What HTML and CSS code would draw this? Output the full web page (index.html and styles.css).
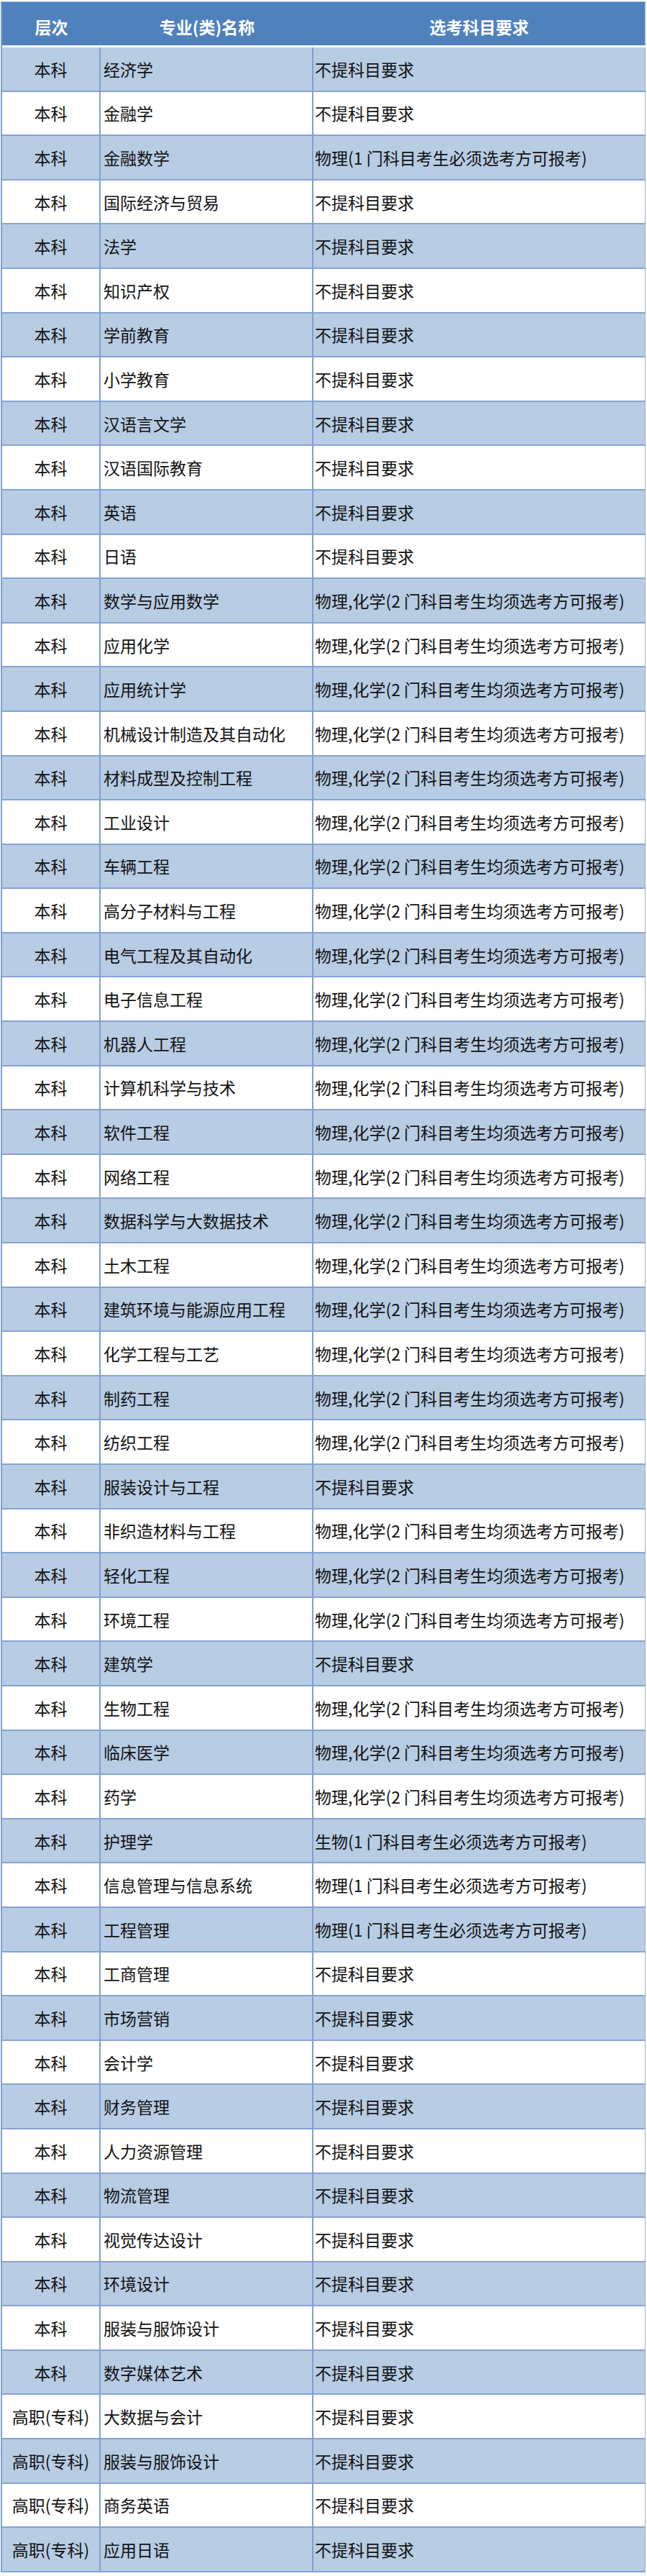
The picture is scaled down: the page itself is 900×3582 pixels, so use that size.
FILE: index.html
```html
<!DOCTYPE html>
<html lang="zh-CN">
<head>
<meta charset="utf-8">
<title>专业选考科目要求</title>
<link rel="stylesheet" href="styles.css">
</head>
<body>
<div class="sheet">
<table class="grid">
<colgroup><col class="c1"><col class="c2"><col class="c3"></colgroup>
<thead>
<tr><th>层次</th><th>专业(类)名称</th><th>选考科目要求</th></tr>
</thead>
<tbody>
<tr><td class="lv">本科</td><td class="nm">经济学</td><td class="rq">不提科目要求</td></tr>
<tr><td class="lv">本科</td><td class="nm">金融学</td><td class="rq">不提科目要求</td></tr>
<tr><td class="lv">本科</td><td class="nm">金融数学</td><td class="rq">物理(1 门科目考生必须选考方可报考)</td></tr>
<tr><td class="lv">本科</td><td class="nm">国际经济与贸易</td><td class="rq">不提科目要求</td></tr>
<tr><td class="lv">本科</td><td class="nm">法学</td><td class="rq">不提科目要求</td></tr>
<tr><td class="lv">本科</td><td class="nm">知识产权</td><td class="rq">不提科目要求</td></tr>
<tr><td class="lv">本科</td><td class="nm">学前教育</td><td class="rq">不提科目要求</td></tr>
<tr><td class="lv">本科</td><td class="nm">小学教育</td><td class="rq">不提科目要求</td></tr>
<tr><td class="lv">本科</td><td class="nm">汉语言文学</td><td class="rq">不提科目要求</td></tr>
<tr><td class="lv">本科</td><td class="nm">汉语国际教育</td><td class="rq">不提科目要求</td></tr>
<tr><td class="lv">本科</td><td class="nm">英语</td><td class="rq">不提科目要求</td></tr>
<tr><td class="lv">本科</td><td class="nm">日语</td><td class="rq">不提科目要求</td></tr>
<tr><td class="lv">本科</td><td class="nm">数学与应用数学</td><td class="rq">物理,化学(2 门科目考生均须选考方可报考)</td></tr>
<tr><td class="lv">本科</td><td class="nm">应用化学</td><td class="rq">物理,化学(2 门科目考生均须选考方可报考)</td></tr>
<tr><td class="lv">本科</td><td class="nm">应用统计学</td><td class="rq">物理,化学(2 门科目考生均须选考方可报考)</td></tr>
<tr><td class="lv">本科</td><td class="nm">机械设计制造及其自动化</td><td class="rq">物理,化学(2 门科目考生均须选考方可报考)</td></tr>
<tr><td class="lv">本科</td><td class="nm">材料成型及控制工程</td><td class="rq">物理,化学(2 门科目考生均须选考方可报考)</td></tr>
<tr><td class="lv">本科</td><td class="nm">工业设计</td><td class="rq">物理,化学(2 门科目考生均须选考方可报考)</td></tr>
<tr><td class="lv">本科</td><td class="nm">车辆工程</td><td class="rq">物理,化学(2 门科目考生均须选考方可报考)</td></tr>
<tr><td class="lv">本科</td><td class="nm">高分子材料与工程</td><td class="rq">物理,化学(2 门科目考生均须选考方可报考)</td></tr>
<tr><td class="lv">本科</td><td class="nm">电气工程及其自动化</td><td class="rq">物理,化学(2 门科目考生均须选考方可报考)</td></tr>
<tr><td class="lv">本科</td><td class="nm">电子信息工程</td><td class="rq">物理,化学(2 门科目考生均须选考方可报考)</td></tr>
<tr><td class="lv">本科</td><td class="nm">机器人工程</td><td class="rq">物理,化学(2 门科目考生均须选考方可报考)</td></tr>
<tr><td class="lv">本科</td><td class="nm">计算机科学与技术</td><td class="rq">物理,化学(2 门科目考生均须选考方可报考)</td></tr>
<tr><td class="lv">本科</td><td class="nm">软件工程</td><td class="rq">物理,化学(2 门科目考生均须选考方可报考)</td></tr>
<tr><td class="lv">本科</td><td class="nm">网络工程</td><td class="rq">物理,化学(2 门科目考生均须选考方可报考)</td></tr>
<tr><td class="lv">本科</td><td class="nm">数据科学与大数据技术</td><td class="rq">物理,化学(2 门科目考生均须选考方可报考)</td></tr>
<tr><td class="lv">本科</td><td class="nm">土木工程</td><td class="rq">物理,化学(2 门科目考生均须选考方可报考)</td></tr>
<tr><td class="lv">本科</td><td class="nm">建筑环境与能源应用工程</td><td class="rq">物理,化学(2 门科目考生均须选考方可报考)</td></tr>
<tr><td class="lv">本科</td><td class="nm">化学工程与工艺</td><td class="rq">物理,化学(2 门科目考生均须选考方可报考)</td></tr>
<tr><td class="lv">本科</td><td class="nm">制药工程</td><td class="rq">物理,化学(2 门科目考生均须选考方可报考)</td></tr>
<tr><td class="lv">本科</td><td class="nm">纺织工程</td><td class="rq">物理,化学(2 门科目考生均须选考方可报考)</td></tr>
<tr><td class="lv">本科</td><td class="nm">服装设计与工程</td><td class="rq">不提科目要求</td></tr>
<tr><td class="lv">本科</td><td class="nm">非织造材料与工程</td><td class="rq">物理,化学(2 门科目考生均须选考方可报考)</td></tr>
<tr><td class="lv">本科</td><td class="nm">轻化工程</td><td class="rq">物理,化学(2 门科目考生均须选考方可报考)</td></tr>
<tr><td class="lv">本科</td><td class="nm">环境工程</td><td class="rq">物理,化学(2 门科目考生均须选考方可报考)</td></tr>
<tr><td class="lv">本科</td><td class="nm">建筑学</td><td class="rq">不提科目要求</td></tr>
<tr><td class="lv">本科</td><td class="nm">生物工程</td><td class="rq">物理,化学(2 门科目考生均须选考方可报考)</td></tr>
<tr><td class="lv">本科</td><td class="nm">临床医学</td><td class="rq">物理,化学(2 门科目考生均须选考方可报考)</td></tr>
<tr><td class="lv">本科</td><td class="nm">药学</td><td class="rq">物理,化学(2 门科目考生均须选考方可报考)</td></tr>
<tr><td class="lv">本科</td><td class="nm">护理学</td><td class="rq">生物(1 门科目考生必须选考方可报考)</td></tr>
<tr><td class="lv">本科</td><td class="nm">信息管理与信息系统</td><td class="rq">物理(1 门科目考生必须选考方可报考)</td></tr>
<tr><td class="lv">本科</td><td class="nm">工程管理</td><td class="rq">物理(1 门科目考生必须选考方可报考)</td></tr>
<tr><td class="lv">本科</td><td class="nm">工商管理</td><td class="rq">不提科目要求</td></tr>
<tr><td class="lv">本科</td><td class="nm">市场营销</td><td class="rq">不提科目要求</td></tr>
<tr><td class="lv">本科</td><td class="nm">会计学</td><td class="rq">不提科目要求</td></tr>
<tr><td class="lv">本科</td><td class="nm">财务管理</td><td class="rq">不提科目要求</td></tr>
<tr><td class="lv">本科</td><td class="nm">人力资源管理</td><td class="rq">不提科目要求</td></tr>
<tr><td class="lv">本科</td><td class="nm">物流管理</td><td class="rq">不提科目要求</td></tr>
<tr><td class="lv">本科</td><td class="nm">视觉传达设计</td><td class="rq">不提科目要求</td></tr>
<tr><td class="lv">本科</td><td class="nm">环境设计</td><td class="rq">不提科目要求</td></tr>
<tr><td class="lv">本科</td><td class="nm">服装与服饰设计</td><td class="rq">不提科目要求</td></tr>
<tr><td class="lv">本科</td><td class="nm">数字媒体艺术</td><td class="rq">不提科目要求</td></tr>
<tr><td class="lv">高职(专科)</td><td class="nm">大数据与会计</td><td class="rq">不提科目要求</td></tr>
<tr><td class="lv">高职(专科)</td><td class="nm">服装与服饰设计</td><td class="rq">不提科目要求</td></tr>
<tr><td class="lv">高职(专科)</td><td class="nm">商务英语</td><td class="rq">不提科目要求</td></tr>
<tr><td class="lv">高职(专科)</td><td class="nm">应用日语</td><td class="rq">不提科目要求</td></tr>
</tbody>
</table>
</div>
</body>
</html>
```
FILE: styles.css
```css
html, body {
  margin: 0;
  padding: 0;
  background: #ffffff;
}

.sheet {
  padding: 2px 2px 4px 1px;
}

.grid {
  width: 897px;
  border-collapse: separate;
  border-spacing: 0;
  table-layout: fixed;
  font-family: "Noto Sans CJK SC", "Noto Sans", sans-serif;
  font-size: 23px;
  color: #111111;
  border-left: 2px solid #7f9fcf;
}

.c1 { width: 137px; }
.c2 { width: 296px; }
.c3 { width: auto; }

.grid th {
  box-sizing: border-box;
  height: 64px;
  padding: 7px 0 0 0;
  background: #4f81bd;
  color: #ffffff;
  font-weight: 700;
  text-align: center;
  vertical-align: middle;
  border-top: 1px solid #9fb3cf;
  border-bottom: 3px solid #ffffff;
}

.grid th:last-child {
  border-right: 1px solid #a9bcd6;
}

.grid td {
  box-sizing: border-box;
  height: 61.6px;
  padding: 0;
  vertical-align: middle;
  white-space: nowrap;
  overflow: hidden;
  border-bottom: 2px solid #85a3d3;
  border-right: 2px solid #7f9fcf;
}

.grid td.rq {
  border-right: 1px solid #9db4d8;
}

.grid tbody tr:nth-child(odd) td {
  background: #b8cce4;
}

.grid tbody tr:nth-child(even) td {
  background: #ffffff;
}

.lv {
  text-align: center;
}

.nm {
  padding-left: 4px !important;
}

.rq {
  padding-left: 2px !important;
}
```
